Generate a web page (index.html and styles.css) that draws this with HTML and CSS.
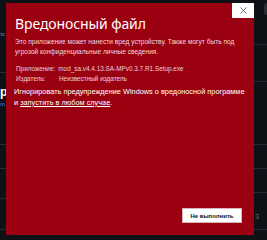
FILE: index.html
```html
<!DOCTYPE html>
<html lang="ru">
<head>
<meta charset="utf-8">
<link rel="stylesheet" href="styles.css">
</head>
<body>
<div class="page">
  <div class="side left">
    <div class="row r1"><span class="tiny">тс</span></div>
    <div class="row r2"><span class="big">р.</span><span class="blue">m</span></div>
    <div class="row r3"></div>
    <div class="row r4"></div>
    <div class="row r5"></div>
    <div class="row r6"></div>
  </div>
  <div class="side right">
    <div class="row q1"><span class="pill"></span></div>
    <div class="row q2"></div>
    <div class="row q3"></div>
    <div class="row q4"></div>
    <div class="row q5"></div>
    <div class="row q6"><span class="num">3</span></div>
    <div class="row q7"></div>
  </div>
</div>

<div class="dialog">
  <button class="close" aria-label="Закрыть">
    <svg width="7" height="7" viewBox="0 0 7 7"><path d="M0.5 0.5L6.5 6.5M6.5 0.5L0.5 6.5" stroke="#6b6b6b" stroke-width="1"/></svg>
  </button>
  <h1 class="title">Вредоносный файл</h1>
  <p class="desc">Это приложение может нанести вред устройству. Также могут быть под угрозой конфиденциальные личные сведения.</p>
  <div class="meta">
    <div class="meta-row"><span class="label">Приложение:</span><span>mod_sa.v4.4.13.SA-MPv0.3.7.R1.Setup.exe</span></div>
    <div class="meta-row"><span class="label fixed">Издатель:</span><span>Неизвестный издатель</span></div>
  </div>
  <p class="ignore"><span class="line">Игнорировать предупреждение Windows о вредоносной программе</span><br>и <a href="#" class="link">запустить в любом случае</a>.</p>
  <div class="footer">
    <button class="btn">Не выполнить</button>
  </div>
</div>
</body>
</html>
```

FILE: styles.css
```css
* { box-sizing: border-box; }
html, body { margin: 0; padding: 0; }
body {
  width: 267px;
  height: 240px;
  overflow: hidden;
  background: #0e1116;
  font-family: "Liberation Sans", Arial, sans-serif;
  position: relative;
}
.page {
  display: flex;
  justify-content: space-between;
  height: 240px;
}
.side { display: flex; flex-direction: column; }
.left { width: 6px; overflow: hidden; }
.right { width: 13px; overflow: hidden; }
.row { border-bottom: 1px solid #262b33; position: relative; }
.r1 { height: 73px; padding-top: 31px; }
.r2 { height: 72px; padding-top: 12px; }
.r3 { height: 24px; }
.r4 { height: 30px; }
.r5 { height: 31px; }
.r6 { flex: 1; border-bottom: none; }
.tiny { font-size: 5px; color: #9aa0a8; display: block; }
.big { display: block; font-size: 12px; font-weight: 700; color: #ffffff; line-height: 14px; }
.blue { display: block; font-size: 6px; color: #3b82f6; line-height: 10px; }
.q1 { height: 45px; padding-top: 3px; }
.q2 { height: 37px; }
.q3 { height: 63px; }
.q4 { height: 24px; }
.q5 { height: 24px; }
.q6 { height: 37px; padding-top: 12px; }
.q7 { flex: 1; border-bottom: none; }
.pill { display: block; width: 8px; height: 12px; margin-left: 10px; background: #2a2f37; border-radius: 3px; }
.num { font-size: 7px; color: #6a7079; padding-left: 1px; }

.dialog {
  position: absolute;
  left: 6px;
  top: 3px;
  width: 248px;
  height: 232px;
  background: #9b0011;
  color: #ffffff;
  display: flex;
  flex-direction: column;
  padding: 0 12px 12px 9px;
}
.close {
  position: absolute;
  top: 0;
  right: 0;
  width: 22px;
  height: 15px;
  border: none;
  padding: 0;
  background: #ffffff;
  display: flex;
  align-items: center;
  justify-content: center;
}
.title {
  margin: 11px 0 0 0;
  font-family: "Noto Sans", sans-serif;
  font-size: 14px;
  font-weight: 400;
  line-height: 20px;
  letter-spacing: -0.1px;
}
.desc {
  margin: 3px 0 0 0;
  font-size: 6.6px;
  line-height: 9.5px;
  color: #f3d7da;
}
.meta { margin-top: 8px; color: #f0cfd3; font-size: 6.4px; line-height: 10px; padding-left: 1px; }
.meta-row { display: flex; white-space: nowrap; }
.label { margin-right: 3px; }
.fixed { width: 40px; }
.ignore {
  margin: 2px -6px 0 -1px;
  font-size: 7.35px;
  line-height: 11px;
  color: #ffffff;
}
.line { white-space: nowrap; }
.link { color: #ffffff; text-decoration: underline; }
.footer { margin-top: auto; display: flex; justify-content: flex-end; }
.btn {
  width: 60px;
  height: 15px;
  padding: 0;
  background: #ffffff;
  border: 1px solid #d9b3b8;
  font-family: "Liberation Sans", Arial, sans-serif;
  font-size: 6px;
  font-weight: 700;
  color: #111111;
}
```
